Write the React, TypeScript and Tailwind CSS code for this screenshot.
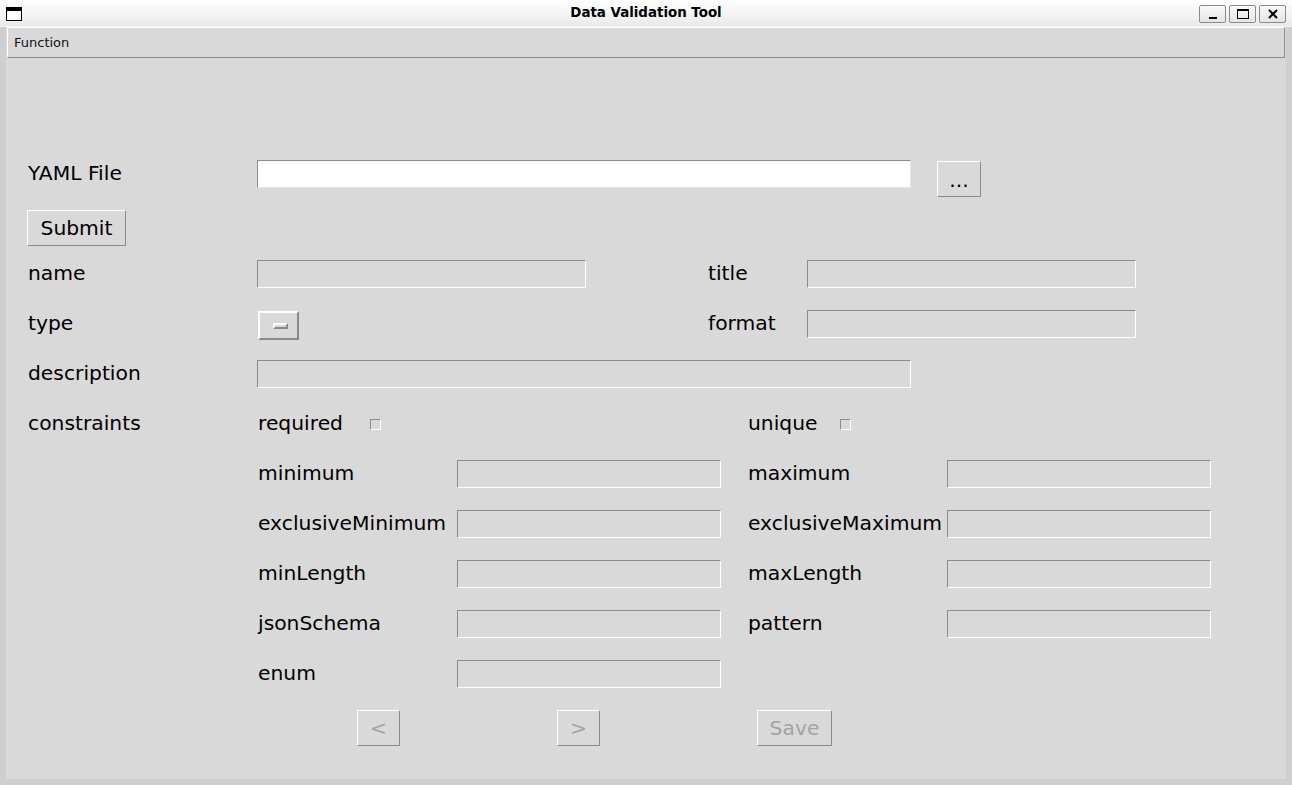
import React from "react";

const FONT = { fontFamily: '"DejaVu Sans", "Liberation Sans", sans-serif' };

function Entry({ w, white = false }: { w: string; white?: boolean }) {
  return (
    <div
      className={`${w} h-[28px] border-t border-l border-t-[#8c8c8c] border-l-[#8c8c8c] border-b border-r ${
        white ? "bg-white border-b-[#e6e6e6] border-r-[#e6e6e6]" : "bg-[#d9d9d9] border-b-white border-r-white"
      }`}
    />
  );
}

function Label({ w, children }: { w: string; children: React.ReactNode }) {
  return (
    <div className={`${w} h-[28px] pb-[2px] flex items-center text-[20.3px] text-black leading-none`}>{children}</div>
  );
}

function Btn({
  w,
  children,
  disabled = false,
}: {
  w: string;
  children: React.ReactNode;
  disabled?: boolean;
}) {
  return (
    <div
      className={`${w} h-[36px] flex items-center justify-center border border-t-white border-l-white border-b-[#8a8a8a] border-r-[#8a8a8a] text-[20.3px] leading-none ${
        disabled ? "text-[#a3a3a3]" : "text-black"
      }`}
    >
      {children}
    </div>
  );
}

function Check() {
  return (
    <div className="w-[11px] h-[11px] border border-t-[#8c8c8c] border-l-[#8c8c8c] border-b-white border-r-white" />
  );
}

function TitleButton({ children }: { children: React.ReactNode }) {
  return (
    <div className="w-[27px] h-[18px] rounded-[2px] border border-[#8a8a8a] bg-gradient-to-b from-[#fafafa] to-[#e4e4e4] flex items-center justify-center">
      {children}
    </div>
  );
}

const Row = ({ children, className = "" }: { children: React.ReactNode; className?: string }) => (
  <div className={`flex items-start h-[50px] ${className}`}>{children}</div>
);

export default function App() {
  return (
    <div className="w-[1292px] h-[785px] bg-[#cfcfcf] flex flex-col overflow-hidden" style={FONT}>
      {/* title bar */}
      <div className="h-[27px] shrink-0 relative bg-gradient-to-b from-white to-[#e9e9e9] border-b border-[#f4f4f4] flex items-center justify-center">
        <svg className="absolute left-[6px] top-[7px]" width="16" height="14" viewBox="0 0 16 14">
          <rect x="0.5" y="0.5" width="15" height="13" fill="white" stroke="black" />
          <rect x="0" y="0" width="16" height="4" fill="black" />
        </svg>
        <span className="text-[13.4px] font-bold text-black">Data Validation Tool</span>
        <div className="absolute right-[6px] top-[5px] flex gap-[3px]">
          <TitleButton>
            <svg width="12" height="12" viewBox="0 0 12 12">
              <rect x="2" y="9" width="8" height="2" fill="black" />
            </svg>
          </TitleButton>
          <TitleButton>
            <svg width="14" height="12" viewBox="0 0 14 12">
              <rect x="1.5" y="1.5" width="11" height="9" fill="none" stroke="black" />
              <rect x="1" y="1" width="12" height="2" fill="black" />
            </svg>
          </TitleButton>
          <TitleButton>
            <svg width="12" height="12" viewBox="0 0 12 12">
              <path d="M2 2 L10 10 M10 2 L2 10" stroke="black" strokeWidth="2" />
            </svg>
          </TitleButton>
        </div>
      </div>

      <div className="flex-1 flex flex-col px-[6px] pb-[6px]">
        <div className="flex-1 bg-[#d9d9d9] flex flex-col">
          {/* menubar */}
          <div className="h-[31px] mx-[1px] shrink-0 border border-t-white border-l-white border-b-[#8a8a8a] border-r-[#8a8a8a] flex items-center pl-[6px]">
            <span className="text-[13px] text-[#111]">Function</span>
          </div>

          <div className="flex flex-col pl-[22px] pt-[102px]">
            {/* YAML */}
            <Row>
              <Label w="w-[229px]">YAML File</Label>
              <Entry w="w-[654px]" white />
              <div className="ml-[26px] mt-[1px]">
                <Btn w="w-[44px]">
                  <span className="h-[35px] leading-[38px] -mt-[1px]">...</span>
                </Btn>
              </div>
            </Row>

            <Row>
              <div className="-ml-[1px]">
                <Btn w="w-[99px]">Submit</Btn>
              </div>
            </Row>

            <Row>
              <Label w="w-[229px]">name</Label>
              <Entry w="w-[329px]" />
              <div className="w-[122px]" />
              <Label w="w-[99px]">title</Label>
              <Entry w="w-[329px]" />
            </Row>

            <Row>
              <Label w="w-[229px]">type</Label>
              <div className="w-[451px] h-[28px]">
                <div className="ml-[1px] mt-[1px] w-[41px] h-[29px] border-2 border-t-white border-l-white border-b-[#8a8a8a] border-r-[#8a8a8a] flex items-center justify-center">
                  <div className="w-[15px] h-[6px] border-2 border-t-white border-l-white border-b-[#8a8a8a] border-r-[#8a8a8a] ml-[4px]" />
                </div>
              </div>
              <Label w="w-[99px]">format</Label>
              <Entry w="w-[329px]" />
            </Row>

            <Row>
              <Label w="w-[229px]">description</Label>
              <Entry w="w-[654px]" />
            </Row>

            <div className="flex items-start">
              <Label w="w-[229px]">constraints</Label>
              <div className="flex flex-col pl-[1px]">
                <Row>
                  <div className="w-[490px] flex items-center h-[28px]">
                    <Label w="w-[112px]">required</Label>
                    <Check />
                  </div>
                  <div className="flex items-center h-[28px]">
                    <Label w="w-[92px]">unique</Label>
                    <Check />
                  </div>
                </Row>
                {[
                  ["minimum", "maximum"],
                  ["exclusiveMinimum", "exclusiveMaximum"],
                  ["minLength", "maxLength"],
                  ["jsonSchema", "pattern"],
                ].map(([a, b]) => (
                  <Row key={a}>
                    <Label w="w-[199px]">{a}</Label>
                    <Entry w="w-[264px]" />
                    <div className="w-[27px]" />
                    <Label w="w-[199px]">{b}</Label>
                    <Entry w="w-[264px]" />
                  </Row>
                ))}
                <Row>
                  <Label w="w-[199px]">enum</Label>
                  <Entry w="w-[264px]" />
                </Row>
              </div>
            </div>

            <Row className="pl-[329px]">
              <div className="w-[200px]">
                <Btn w="w-[43px]" disabled>
                  &lt;
                </Btn>
              </div>
              <div className="w-[200px]">
                <Btn w="w-[43px]" disabled>
                  &gt;
                </Btn>
              </div>
              <div className="w-[200px]">
                <Btn w="w-[75px]" disabled>
                  Save
                </Btn>
              </div>
            </Row>
          </div>
        </div>
      </div>
    </div>
  );
}
